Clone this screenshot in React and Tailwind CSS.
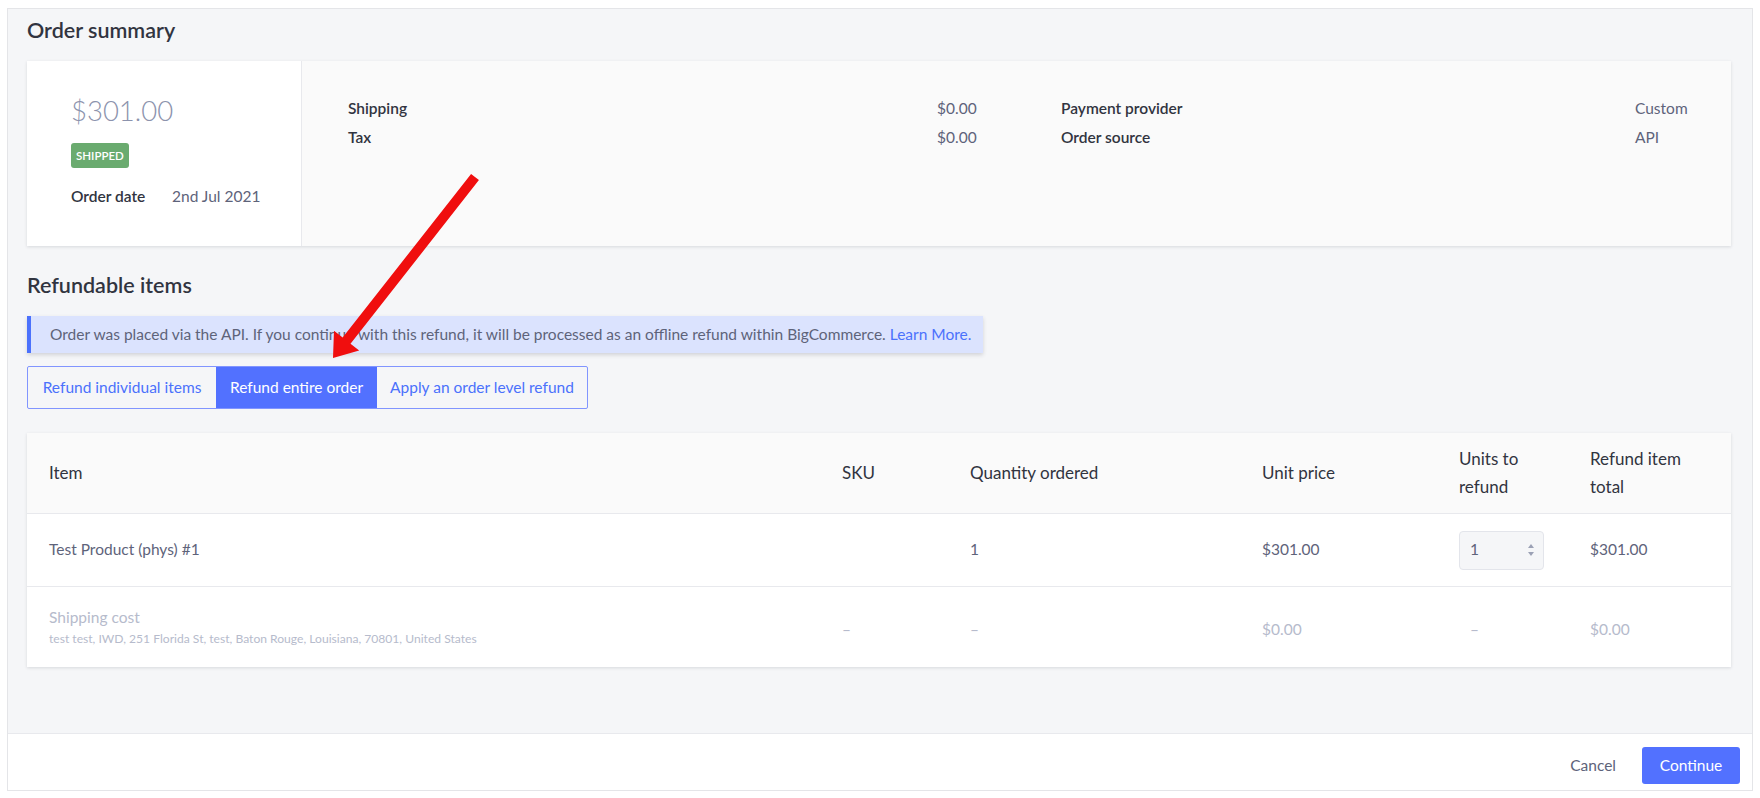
import React from "react";

const Row = ({ label, value }) => (
  <>
    <div className="font-semibold text-[#313440]">{label}</div>
    <div className="text-[#5e637a]">{value}</div>
  </>
);

const cols = "grid grid-cols-[793px_128px_292px_197px_131px_1fr] items-center pl-[22px]";

export default function App() {
  return (
    <div className="relative w-[1760px] h-[798px] bg-white pt-[8px] pl-[7px] font-['Lato',sans-serif] text-[15.5px] overflow-hidden">
      {/* frame */}
      <div className="w-[1746px] h-[783px] border border-[#e4e5e8] bg-[#f5f6f8] flex flex-col">
        <div className="flex-1 pl-[19px] pr-[21px] pt-[9px]">
          <h2 className="h-[24px] leading-[24px] text-[21.5px] font-semibold text-[#313440]">Order summary</h2>

          {/* summary card */}
          <div className="mt-[19px] h-[185px] flex bg-[#fafafa] shadow-[0_1px_3px_rgba(49,52,64,0.15)]">
            <div className="w-[275px] bg-white border-r border-[#e8e9ed] pl-[44px] pt-[34px]">
              <div className="h-[32px] leading-[32px] text-[27.5px] font-light text-[#8c93ad]">$301.00</div>
              <div className="mt-[16px] inline-flex items-center h-[25px] px-[5px] rounded-[3px] bg-[#6aab6f] text-white text-[11.5px] font-semibold">
                SHIPPED
              </div>
              <div className="mt-[18px] flex h-[20px] leading-[20px]">
                <span className="w-[101px] font-semibold text-[#313440]">Order date</span>
                <span className="text-[#5e637a]">2nd Jul 2021</span>
              </div>
            </div>
            <div className="flex-1 pl-[46px] pt-[33px]">
              <div className="grid grid-cols-[589px_124px_574px_auto] leading-[29px]">
                <Row label="Shipping" value="$0.00" />
                <Row label="Payment provider" value="Custom" />
                <Row label="Tax" value="$0.00" />
                <Row label="Order source" value="API" />
              </div>
            </div>
          </div>

          <h2 className="mt-[27px] h-[24px] leading-[24px] text-[21.5px] font-semibold text-[#313440]">Refundable items</h2>

          {/* info banner */}
          <div className="mt-[19px] w-[956px] h-[37px] flex items-center pl-[19px] border-l-4 border-[#4b71fc] bg-[#dbe3fe] shadow-[0_2px_4px_rgba(49,52,64,0.18)] text-[#5e637a] whitespace-nowrap">
            Order was placed via the API. If you continue with this refund, it will be processed as an offline refund within BigCommerce.&nbsp;
            <span className="text-[#4b71fc]">Learn More.</span>
          </div>

          {/* segmented buttons */}
          <div className="mt-[13px] flex h-[43px] w-fit border border-[#8195ff] rounded-[2px] overflow-hidden text-[#4b71fc]">
            <div className="w-[188px] flex items-center justify-center">Refund individual items</div>
            <div className="w-[161px] flex items-center justify-center bg-[#5271ff] text-white">Refund entire order</div>
            <div className="w-[210px] flex items-center justify-center">Apply an order level refund</div>
          </div>

          {/* table */}
          <div className="mt-[24px] bg-white shadow-[0_1px_3px_rgba(49,52,64,0.15)]">
            <div className={`${cols} h-[81px] bg-[#fafafa] border-b border-[#e8e9ed] text-[#313440] text-[17px] leading-[28px]`}>
              <div>Item</div>
              <div>SKU</div>
              <div>Quantity ordered</div>
              <div>Unit price</div>
              <div>Units to<br />refund</div>
              <div>Refund item<br />total</div>
            </div>
            <div className={`${cols} h-[73px] border-b border-[#e8e9ed] text-[#5e637a]`}>
              <div>Test Product (phys) #1</div>
              <div></div>
              <div>1</div>
              <div>$301.00</div>
              <div>
                <div className="w-[85px] h-[39px] flex items-center justify-between pl-[10px] pr-[8px] rounded-[4px] border border-[#e3e5eb] bg-[#f5f6f8] text-[#5e637a]">
                  <span>1</span>
                  <svg width="8" height="14" viewBox="0 0 8 14">
                    <path d="M4 1 L7 5 L1 5 Z" fill="#9ba1b5" />
                    <path d="M4 13 L7 9 L1 9 Z" fill="#9ba1b5" />
                  </svg>
                </div>
              </div>
              <div>$301.00</div>
            </div>
            <div className={`${cols} h-[80px] text-[#b6bbcc]`}>
              <div>
                <div className="leading-[20px]">Shipping cost</div>
                <div className="mt-[4px] text-[12.1px] leading-[16px]">test test, IWD, 251 Florida St, test, Baton Rouge, Louisiana, 70801, United States</div>
              </div>
              <div className="pt-[6px]">–</div>
              <div className="pt-[6px]">–</div>
              <div className="pt-[6px]">$0.00</div>
              <div className="pt-[6px] pl-[11px]">–</div>
              <div className="pt-[6px]">$0.00</div>
            </div>
          </div>
        </div>

        {/* footer */}
        <div className="h-[57px] bg-white border-t border-[#e8e9ed] flex items-start justify-end pt-[13px] pr-[12px]">
          <div className="h-[37px] flex items-center mr-[26px] text-[#5e637a]">Cancel</div>
          <div className="w-[98px] h-[37px] rounded-[3px] bg-[#5271ff] text-white flex items-center justify-center">Continue</div>
        </div>
      </div>

      {/* red annotation arrow */}
      <svg className="absolute left-0 top-0 pointer-events-none" width="1760" height="798">
        <polygon
          points="471.07,173.91 478.93,180.09 350.51,343.78 359.17,350.57 333,358 333.99,330.81 342.65,337.6"
          fill="#f00e0e"
        />
      </svg>
    </div>
  );
}
